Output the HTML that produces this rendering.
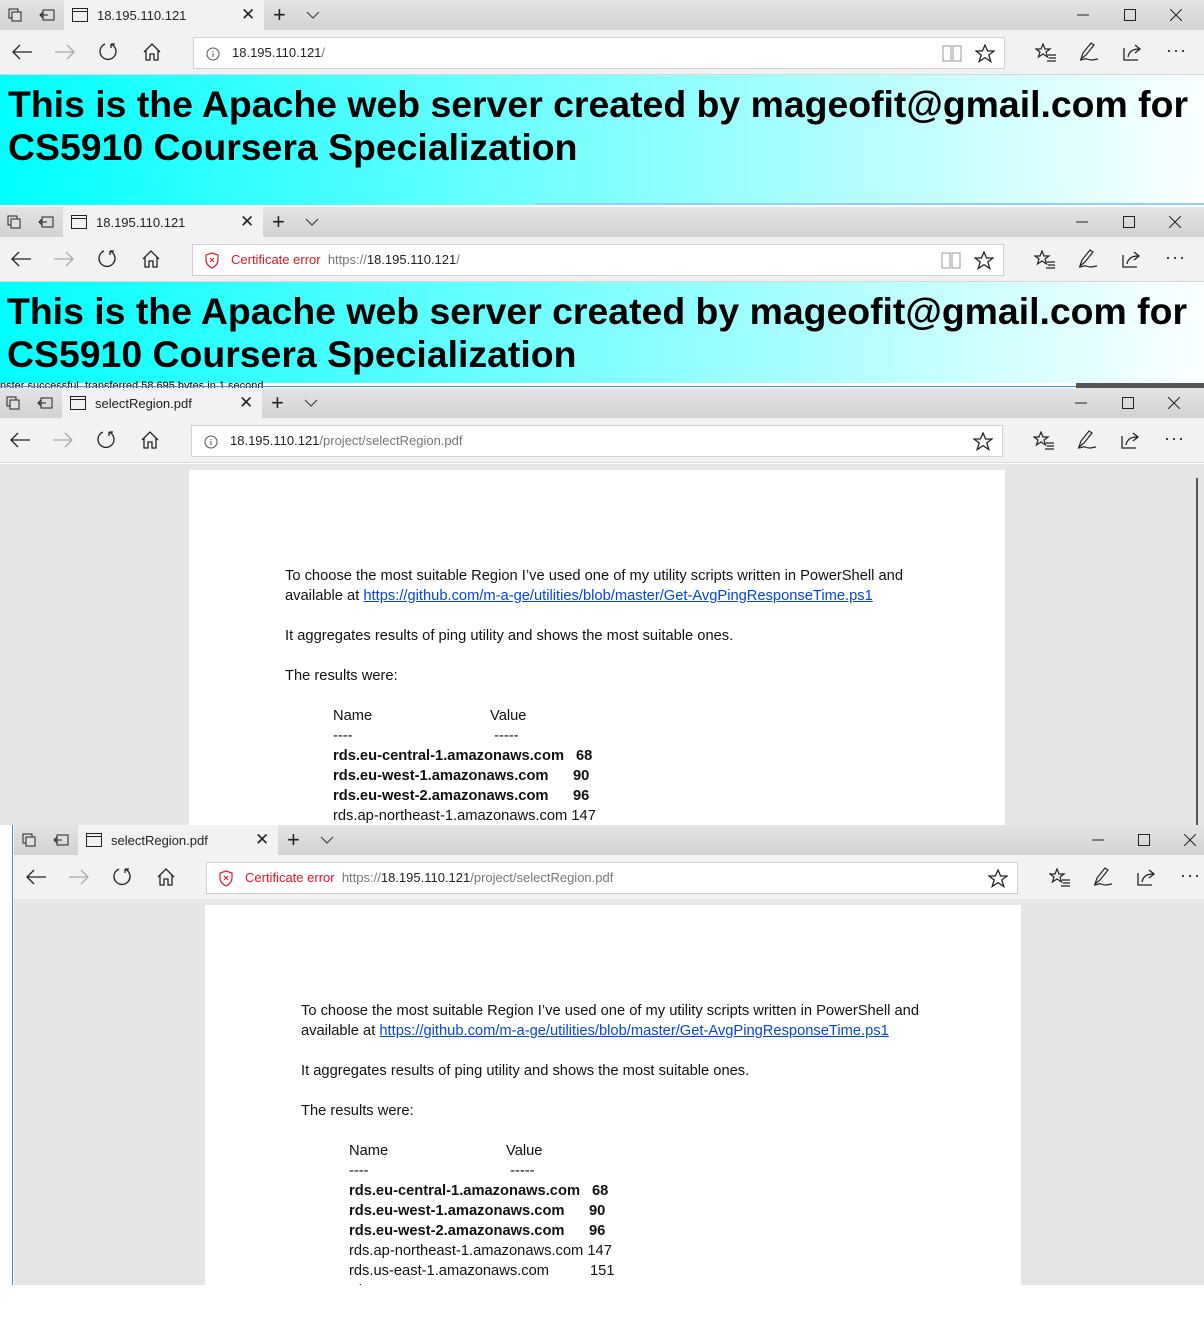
<!DOCTYPE html>
<html><head><meta charset="utf-8"><style>
*{margin:0;padding:0;box-sizing:border-box}
html,body{width:1204px;height:1322px;overflow:hidden}
body{background:#fff;position:relative;font-family:"Liberation Sans",Arial,sans-serif}
.win{position:absolute;width:1220px;overflow:hidden}
.tabs{position:absolute;left:0;top:0;width:100%;height:30px;background:linear-gradient(#e4e4e4,#d2d2d2)}
.tab{position:absolute;left:64px;top:0;width:200px;height:30px;background:#f2f2f2}
.nav{position:absolute;left:0;top:30px;width:100%;height:45px;background:#f2f2f2;border-bottom:1px solid #d8d8d8}
.addr{position:absolute;left:193px;top:7px;width:812px;height:32px;background:#fff;border:1px solid #d0d0d0;font-size:13px;color:#222;line-height:30px;padding-left:38px}
.addr .g{color:#777}.addr .r{color:#e81123}
.i{position:absolute;font-size:16px;color:#222;line-height:1}
svg.ic{position:absolute}
.t{position:absolute;font-size:13px;color:#222;top:8px}
.hero{position:absolute;left:0;top:75px;width:100%;background:linear-gradient(90deg,#00ffff 0%,#8ffefe 55%,#ffffff 100%);padding:8px 0 0 8px;font-weight:bold;font-size:37.4px;line-height:43px;color:#000;white-space:nowrap;overflow:hidden}
.pdfbg{position:absolute;left:0;top:76px;width:100%;background:#e6e6e6;overflow:hidden}
.page{position:absolute;left:189px;width:816px;background:#fff;top:6px;height:600px;font-size:14.7px;color:#111;line-height:20px}
.page p{position:absolute;left:96px;white-space:nowrap}
.page a{color:#0645d8;text-decoration:underline}
.tb{position:absolute;left:144px;white-space:nowrap}
.b{font-weight:bold}
</style></head><body>

<!-- window 1 -->
<div class="win" style="left:0;top:0;height:207px">
 <div class="tabs">
  <svg class="ic" style="left:8px;top:8px" width="14" height="14"><rect x="1" y="1" width="9" height="9" fill="none" stroke="#222"/><rect x="4" y="4" width="9" height="9" fill="#e0e0e0" stroke="#222"/></svg>
  <svg class="ic" style="left:39px;top:9px" width="16" height="12"><rect x="4" y="1" width="11" height="10" fill="none" stroke="#222"/><path d="M1 6h8M4 3l-3 3 3 3" fill="none" stroke="#222"/></svg>
  <div class="tab"><svg class="ic" style="left:8px;top:8px" width="16" height="14"><rect x="0.5" y="0.5" width="15" height="13" fill="none" stroke="#222"/><path d="M0 3.5h16" stroke="#222"/></svg><span class="t" style="left:33px">18.195.110.121</span><span class="i" style="left:177px;top:6px;font-size:17px">✕</span></div>
  <span class="i" style="left:273px;top:4px;font-size:22px;font-weight:300">+</span>
  <svg class="ic" style="left:306px;top:11px" width="14" height="8"><path d="M1 1l6 6 6-6" fill="none" stroke="#333"/></svg>
  <svg class="ic" style="left:1077px;top:14px" width="12" height="2"><path d="M0 1h12" stroke="#222"/></svg>
  <svg class="ic" style="left:1124px;top:9px" width="12" height="12"><rect x=".5" y=".5" width="11" height="11" fill="none" stroke="#222"/></svg>
  <svg class="ic" style="left:1170px;top:9px" width="12" height="12"><path d="M0 0l12 12M12 0L0 12" stroke="#222"/></svg>
 </div>
 <div class="nav">
  <svg class="ic" style="left:12px;top:14px" width="20" height="16"><path d="M1 8h19M8 1L1 8l7 7" fill="none" stroke="#222" stroke-width="1.3"/></svg>
  <svg class="ic" style="left:55px;top:14px" width="20" height="16"><path d="M0 8h19M12 1l7 7-7 7" fill="none" stroke="#aaa" stroke-width="1.3"/></svg>
  <svg class="ic" style="left:98px;top:12px" width="20" height="20"><path d="M7 2A8 8 0 1 0 13 2M13 2v4M13 2h4" fill="none" stroke="#222" stroke-width="1.3"/></svg>
  <svg class="ic" style="left:142px;top:12px" width="20" height="20"><path d="M2 10L10 2l8 8M4 8v10h4v-6h4v6h4V8" fill="none" stroke="#222" stroke-width="1.3"/></svg>
  <div class="addr"><svg class="ic" style="left:12px;top:9px" width="14" height="14"><circle cx="7" cy="7" r="6" fill="none" stroke="#555"/><path d="M7 6v4M7 4v1" stroke="#555"/></svg>18.195.110.121<span class="g">/</span>
   <svg class="ic" style="left:748px;top:7px" width="20" height="17"><path d="M1 1h8v15H1zM11 1h8v15h-8z" fill="none" stroke="#999"/></svg>
   <svg class="ic" style="left:781px;top:6px" width="20" height="19"><path d="M10 1l2.6 6h6.4l-5.2 4 2 6.5L10 13.6 4.2 17.5l2-6.5L1 7h6.4z" fill="none" stroke="#222" stroke-width="1.3"/></svg>
  </div>
  <svg class="ic" style="left:1035px;top:13px" width="22" height="19"><path d="M8 1l2 5h5l-4 3 1.6 5L8 11 3.4 14 5 9 1 6h5z" fill="none" stroke="#222" stroke-width="1.2"/><path d="M13 12h8M14 15h7M12 18h9" stroke="#222" stroke-width="1.2"/></svg>
  <svg class="ic" style="left:1078px;top:12px" width="22" height="20"><path d="M3 17l2-6 8-10 3 2-8 10zM2 18c4 0 5-2 7-1s3 1 5 1 4-1 6-1" fill="none" stroke="#222" stroke-width="1.2"/></svg>
  <svg class="ic" style="left:1122px;top:12px" width="22" height="20"><path d="M2 6v12h14M6 15c1-6 5-8 11-8M13 3l5 4-5 4" fill="none" stroke="#222" stroke-width="1.3"/></svg>
  <span class="i" style="left:1166px;top:11px;font-size:18px;letter-spacing:1px">···</span>
 </div>
 <div class="hero" style="height:130px">This is the Apache web server created by mageofit@gmail.com for<br>CS5910 Coursera Specialization</div>
 <div style="position:absolute;left:535px;top:203px;width:670px;height:2px;background:#8fd0ff"></div>
</div>

<!-- window 2 -->
<div class="win" style="left:-1px;top:207px;height:176px">
 <div class="tabs">
  <svg class="ic" style="left:8px;top:8px" width="14" height="14"><rect x="1" y="1" width="9" height="9" fill="none" stroke="#222"/><rect x="4" y="4" width="9" height="9" fill="#e0e0e0" stroke="#222"/></svg>
  <svg class="ic" style="left:39px;top:9px" width="16" height="12"><rect x="4" y="1" width="11" height="10" fill="none" stroke="#222"/><path d="M1 6h8M4 3l-3 3 3 3" fill="none" stroke="#222"/></svg>
  <div class="tab"><svg class="ic" style="left:8px;top:8px" width="16" height="14"><rect x="0.5" y="0.5" width="15" height="13" fill="none" stroke="#222"/><path d="M0 3.5h16" stroke="#222"/></svg><span class="t" style="left:33px">18.195.110.121</span><span class="i" style="left:177px;top:6px;font-size:17px">✕</span></div>
  <span class="i" style="left:273px;top:4px;font-size:22px">+</span>
  <svg class="ic" style="left:306px;top:11px" width="14" height="8"><path d="M1 1l6 6 6-6" fill="none" stroke="#333"/></svg>
  <svg class="ic" style="left:1077px;top:14px" width="12" height="2"><path d="M0 1h12" stroke="#222"/></svg>
  <svg class="ic" style="left:1124px;top:9px" width="12" height="12"><rect x=".5" y=".5" width="11" height="11" fill="none" stroke="#222"/></svg>
  <svg class="ic" style="left:1170px;top:9px" width="12" height="12"><path d="M0 0l12 12M12 0L0 12" stroke="#222"/></svg>
 </div>
 <div class="nav">
  <svg class="ic" style="left:12px;top:14px" width="20" height="16"><path d="M1 8h19M8 1L1 8l7 7" fill="none" stroke="#222" stroke-width="1.3"/></svg>
  <svg class="ic" style="left:55px;top:14px" width="20" height="16"><path d="M0 8h19M12 1l7 7-7 7" fill="none" stroke="#aaa" stroke-width="1.3"/></svg>
  <svg class="ic" style="left:98px;top:12px" width="20" height="20"><path d="M7 2A8 8 0 1 0 13 2M13 2v4M13 2h4" fill="none" stroke="#222" stroke-width="1.3"/></svg>
  <svg class="ic" style="left:142px;top:12px" width="20" height="20"><path d="M2 10L10 2l8 8M4 8v10h4v-6h4v6h4V8" fill="none" stroke="#222" stroke-width="1.3"/></svg>
  <div class="addr"><svg class="ic" style="left:11px;top:7px" width="16" height="17"><path d="M8 1l6 2v5c0 4-3 6.5-6 8-3-1.5-6-4-6-8V3z" fill="none" stroke="#e81123" stroke-width="1.2"/><path d="M6 6l4 4M10 6l-4 4" stroke="#e81123"/></svg><span class="r">Certificate error</span>&nbsp; <span class="g">https://</span>18.195.110.121<span class="g">/</span>
   <svg class="ic" style="left:748px;top:7px" width="20" height="17"><path d="M1 1h8v15H1zM11 1h8v15h-8z" fill="none" stroke="#999"/></svg>
   <svg class="ic" style="left:781px;top:6px" width="20" height="19"><path d="M10 1l2.6 6h6.4l-5.2 4 2 6.5L10 13.6 4.2 17.5l2-6.5L1 7h6.4z" fill="none" stroke="#222" stroke-width="1.3"/></svg>
  </div>
  <svg class="ic" style="left:1035px;top:13px" width="22" height="19"><path d="M8 1l2 5h5l-4 3 1.6 5L8 11 3.4 14 5 9 1 6h5z" fill="none" stroke="#222" stroke-width="1.2"/><path d="M13 12h8M14 15h7M12 18h9" stroke="#222" stroke-width="1.2"/></svg>
  <svg class="ic" style="left:1078px;top:12px" width="22" height="20"><path d="M3 17l2-6 8-10 3 2-8 10zM2 18c4 0 5-2 7-1s3 1 5 1 4-1 6-1" fill="none" stroke="#222" stroke-width="1.2"/></svg>
  <svg class="ic" style="left:1122px;top:12px" width="22" height="20"><path d="M2 6v12h14M6 15c1-6 5-8 11-8M13 3l5 4-5 4" fill="none" stroke="#222" stroke-width="1.3"/></svg>
  <span class="i" style="left:1166px;top:11px;font-size:18px;letter-spacing:1px">···</span>
 </div>
 <div class="hero" style="height:101px">This is the Apache web server created by mageofit@gmail.com for<br>CS5910 Coursera Specialization</div>
</div>
<div style="position:absolute;left:0;top:381px;font-size:11px;line-height:10px;color:#000;white-space:nowrap;height:7px;overflow:hidden;width:1204px">nster successful, transferred 58,695 bytes in 1 second</div>
<div style="position:absolute;left:0;top:386px;width:1204px;height:1px;background:#3a8fd8"></div>
<div style="position:absolute;left:1076px;top:383px;width:128px;height:5px;background:#555"></div>

<!-- window 3 -->
<div class="win" style="left:-2px;top:388px;height:437px">
 <div class="tabs">
  <svg class="ic" style="left:8px;top:8px" width="14" height="14"><rect x="1" y="1" width="9" height="9" fill="none" stroke="#222"/><rect x="4" y="4" width="9" height="9" fill="#e0e0e0" stroke="#222"/></svg>
  <svg class="ic" style="left:39px;top:9px" width="16" height="12"><rect x="4" y="1" width="11" height="10" fill="none" stroke="#222"/><path d="M1 6h8M4 3l-3 3 3 3" fill="none" stroke="#222"/></svg>
  <div class="tab"><svg class="ic" style="left:8px;top:8px" width="16" height="14"><rect x="0.5" y="0.5" width="15" height="13" fill="none" stroke="#222"/><path d="M0 3.5h16" stroke="#222"/></svg><span class="t" style="left:33px">selectRegion.pdf</span><span class="i" style="left:177px;top:6px;font-size:17px">✕</span></div>
  <span class="i" style="left:273px;top:4px;font-size:22px">+</span>
  <svg class="ic" style="left:306px;top:11px" width="14" height="8"><path d="M1 1l6 6 6-6" fill="none" stroke="#333"/></svg>
  <svg class="ic" style="left:1077px;top:14px" width="12" height="2"><path d="M0 1h12" stroke="#222"/></svg>
  <svg class="ic" style="left:1124px;top:9px" width="12" height="12"><rect x=".5" y=".5" width="11" height="11" fill="none" stroke="#222"/></svg>
  <svg class="ic" style="left:1170px;top:9px" width="12" height="12"><path d="M0 0l12 12M12 0L0 12" stroke="#222"/></svg>
 </div>
 <div class="nav" style="top:30px;height:45px">
  <svg class="ic" style="left:12px;top:14px" width="20" height="16"><path d="M1 8h19M8 1L1 8l7 7" fill="none" stroke="#222" stroke-width="1.3"/></svg>
  <svg class="ic" style="left:55px;top:14px" width="20" height="16"><path d="M0 8h19M12 1l7 7-7 7" fill="none" stroke="#aaa" stroke-width="1.3"/></svg>
  <svg class="ic" style="left:98px;top:12px" width="20" height="20"><path d="M7 2A8 8 0 1 0 13 2M13 2v4M13 2h4" fill="none" stroke="#222" stroke-width="1.3"/></svg>
  <svg class="ic" style="left:142px;top:12px" width="20" height="20"><path d="M2 10L10 2l8 8M4 8v10h4v-6h4v6h4V8" fill="none" stroke="#222" stroke-width="1.3"/></svg>
  <div class="addr"><svg class="ic" style="left:12px;top:9px" width="14" height="14"><circle cx="7" cy="7" r="6" fill="none" stroke="#555"/><path d="M7 6v4M7 4v1" stroke="#555"/></svg>18.195.110.121<span class="g">/project/selectRegion.pdf</span>
   <svg class="ic" style="left:781px;top:6px" width="20" height="19"><path d="M10 1l2.6 6h6.4l-5.2 4 2 6.5L10 13.6 4.2 17.5l2-6.5L1 7h6.4z" fill="none" stroke="#222" stroke-width="1.3"/></svg>
  </div>
  <svg class="ic" style="left:1035px;top:13px" width="22" height="19"><path d="M8 1l2 5h5l-4 3 1.6 5L8 11 3.4 14 5 9 1 6h5z" fill="none" stroke="#222" stroke-width="1.2"/><path d="M13 12h8M14 15h7M12 18h9" stroke="#222" stroke-width="1.2"/></svg>
  <svg class="ic" style="left:1078px;top:12px" width="22" height="20"><path d="M3 17l2-6 8-10 3 2-8 10zM2 18c4 0 5-2 7-1s3 1 5 1 4-1 6-1" fill="none" stroke="#222" stroke-width="1.2"/></svg>
  <svg class="ic" style="left:1122px;top:12px" width="22" height="20"><path d="M2 6v12h14M6 15c1-6 5-8 11-8M13 3l5 4-5 4" fill="none" stroke="#222" stroke-width="1.3"/></svg>
  <span class="i" style="left:1166px;top:11px;font-size:18px;letter-spacing:1px">···</span>
 </div>
 <div class="pdfbg" style="height:361px">
  <div class="page" style="left:191px">
   <p style="top:96px">To choose the most suitable Region I’ve used one of my utility scripts written in PowerShell and<br>available at <a>https://github.com/m-a-ge/utilities/blob/master/Get-AvgPingResponseTime.ps1</a></p>
   <p style="top:156px">It aggregates results of ping utility and shows the most suitable ones.</p>
   <p style="top:196px">The results were:</p>
   <div class="tb" style="top:236px">Name<br>----<br><span class="b">rds.eu-central-1.amazonaws.com</span><br><span class="b">rds.eu-west-1.amazonaws.com</span><br><span class="b">rds.eu-west-2.amazonaws.com</span><br>rds.ap-northeast-1.amazonaws.com 147</div>
   <div class="tb" style="top:236px;left:301px">Value<br>&nbsp;-----</div>
   <div class="tb b" style="top:276px;left:387px">68</div>
   <div class="tb b" style="top:296px;left:384px">90</div>
   <div class="tb b" style="top:316px;left:384px">96</div>
  </div>
 </div>
 <div style="position:absolute;left:1198px;top:90px;width:2px;height:347px;background:#555"></div>
</div>

<!-- window 4 -->
<div style="position:absolute;left:12px;top:825px;width:1px;height:460px;background:#3a8fd8"></div>
<div class="win" style="left:14px;top:825px;height:460px">
 <div class="tabs">
  <svg class="ic" style="left:8px;top:8px" width="14" height="14"><rect x="1" y="1" width="9" height="9" fill="none" stroke="#222"/><rect x="4" y="4" width="9" height="9" fill="#e0e0e0" stroke="#222"/></svg>
  <svg class="ic" style="left:39px;top:9px" width="16" height="12"><rect x="4" y="1" width="11" height="10" fill="none" stroke="#222"/><path d="M1 6h8M4 3l-3 3 3 3" fill="none" stroke="#222"/></svg>
  <div class="tab"><svg class="ic" style="left:8px;top:8px" width="16" height="14"><rect x="0.5" y="0.5" width="15" height="13" fill="none" stroke="#222"/><path d="M0 3.5h16" stroke="#222"/></svg><span class="t" style="left:33px">selectRegion.pdf</span><span class="i" style="left:177px;top:6px;font-size:17px">✕</span></div>
  <span class="i" style="left:273px;top:4px;font-size:22px">+</span>
  <svg class="ic" style="left:306px;top:11px" width="14" height="8"><path d="M1 1l6 6 6-6" fill="none" stroke="#333"/></svg>
  <svg class="ic" style="left:1078px;top:14px" width="12" height="2"><path d="M0 1h12" stroke="#222"/></svg>
  <svg class="ic" style="left:1124px;top:9px" width="12" height="12"><rect x=".5" y=".5" width="11" height="11" fill="none" stroke="#222"/></svg>
  <svg class="ic" style="left:1170px;top:9px" width="12" height="12"><path d="M0 0l12 12M12 0L0 12" stroke="#222"/></svg>
 </div>
 <div class="nav">
  <svg class="ic" style="left:12px;top:14px" width="20" height="16"><path d="M1 8h19M8 1L1 8l7 7" fill="none" stroke="#222" stroke-width="1.3"/></svg>
  <svg class="ic" style="left:55px;top:14px" width="20" height="16"><path d="M0 8h19M12 1l7 7-7 7" fill="none" stroke="#aaa" stroke-width="1.3"/></svg>
  <svg class="ic" style="left:98px;top:12px" width="20" height="20"><path d="M7 2A8 8 0 1 0 13 2M13 2v4M13 2h4" fill="none" stroke="#222" stroke-width="1.3"/></svg>
  <svg class="ic" style="left:142px;top:12px" width="20" height="20"><path d="M2 10L10 2l8 8M4 8v10h4v-6h4v6h4V8" fill="none" stroke="#222" stroke-width="1.3"/></svg>
  <div class="addr" style="left:192px"><svg class="ic" style="left:11px;top:7px" width="16" height="17"><path d="M8 1l6 2v5c0 4-3 6.5-6 8-3-1.5-6-4-6-8V3z" fill="none" stroke="#e81123" stroke-width="1.2"/><path d="M6 6l4 4M10 6l-4 4" stroke="#e81123"/></svg><span class="r">Certificate error</span>&nbsp; <span class="g">https://</span>18.195.110.121<span class="g">/project/selectRegion.pdf</span>
   <svg class="ic" style="left:781px;top:6px" width="20" height="19"><path d="M10 1l2.6 6h6.4l-5.2 4 2 6.5L10 13.6 4.2 17.5l2-6.5L1 7h6.4z" fill="none" stroke="#222" stroke-width="1.3"/></svg>
  </div>
  <svg class="ic" style="left:1035px;top:13px" width="22" height="19"><path d="M8 1l2 5h5l-4 3 1.6 5L8 11 3.4 14 5 9 1 6h5z" fill="none" stroke="#222" stroke-width="1.2"/><path d="M13 12h8M14 15h7M12 18h9" stroke="#222" stroke-width="1.2"/></svg>
  <svg class="ic" style="left:1078px;top:12px" width="22" height="20"><path d="M3 17l2-6 8-10 3 2-8 10zM2 18c4 0 5-2 7-1s3 1 5 1 4-1 6-1" fill="none" stroke="#222" stroke-width="1.2"/></svg>
  <svg class="ic" style="left:1122px;top:12px" width="22" height="20"><path d="M2 6v12h14M6 15c1-6 5-8 11-8M13 3l5 4-5 4" fill="none" stroke="#222" stroke-width="1.3"/></svg>
  <span class="i" style="left:1166px;top:11px;font-size:18px;letter-spacing:1px">···</span>
 </div>
 <div class="pdfbg" style="top:74px;height:386px">
  <div class="page" style="left:191px">
   <p style="top:96px">To choose the most suitable Region I’ve used one of my utility scripts written in PowerShell and<br>available at <a>https://github.com/m-a-ge/utilities/blob/master/Get-AvgPingResponseTime.ps1</a></p>
   <p style="top:156px">It aggregates results of ping utility and shows the most suitable ones.</p>
   <p style="top:196px">The results were:</p>
   <div class="tb" style="top:236px">Name<br>----<br><span class="b">rds.eu-central-1.amazonaws.com</span><br><span class="b">rds.eu-west-1.amazonaws.com</span><br><span class="b">rds.eu-west-2.amazonaws.com</span><br>rds.ap-northeast-1.amazonaws.com 147<br>rds.us-east-1.amazonaws.com<br>rds.us-west-1.amazonaws.com</div>
   <div class="tb" style="top:236px;left:301px">Value<br>&nbsp;-----</div>
   <div class="tb b" style="top:276px;left:387px">68</div>
   <div class="tb b" style="top:296px;left:384px">90</div>
   <div class="tb b" style="top:316px;left:384px">96</div>
   <div class="tb" style="top:356px;left:385px">151<br>152</div>
  </div>
 </div>
</div>
</body></html>
